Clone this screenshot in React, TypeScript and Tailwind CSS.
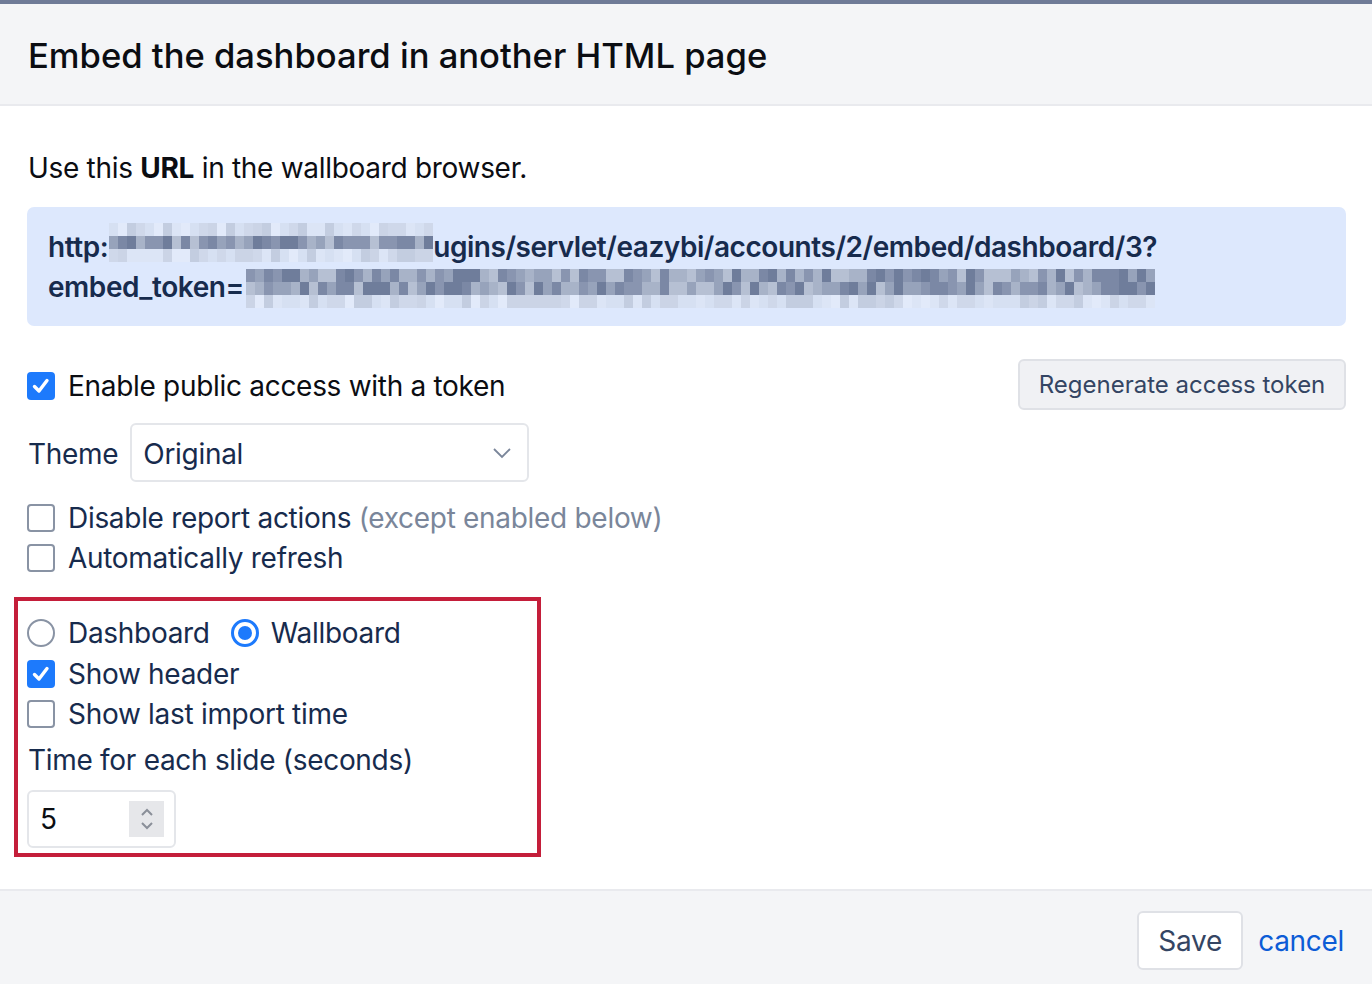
import React from "react";

function rand(seed: number) {
  let s = seed;
  return () => {
    s = (s * 9301 + 49297) % 233280;
    return s / 233280;
  };
}

const mid = ["#6f7d9b", "#7b88a5", "#8995b0", "#97a3bb", "#a8b3c8", "#b6c0d3"];
const light = ["#c3cde0", "#cfd8ea", "#d6e0f2", "#e2eafa", "#cbd4e6", "#dce5f6"];

function Pixels({ width, seed, rows }: { width: number; seed: number; rows: string[][] }) {
  const r = rand(seed);
  const cols = Math.floor(width / 9);
  return (
    <span className="inline-flex flex-col align-middle">
      {rows.map((pal, i) => (
        <span key={i} className="flex h-[13px]">
          {Array.from({ length: cols }).map((_, j) => (
            <span
              key={j}
              className="h-full w-[9px]"
              style={{ background: pal[Math.floor(r() * pal.length)] }}
            />
          ))}
        </span>
      ))}
    </span>
  );
}

function Check({ checked }: { checked?: boolean }) {
  return checked ? (
    <span className="flex h-[28px] w-[28px] shrink-0 items-center justify-center rounded-[4px] bg-[#1d7afc]">
      <svg width="22" height="22" viewBox="0 0 22 22">
        <path d="M4.5 11.5 L9 16 L17 5.5" fill="none" stroke="white" strokeWidth="3.4" strokeLinecap="round" strokeLinejoin="round" />
      </svg>
    </span>
  ) : (
    <span className="h-[28px] w-[28px] shrink-0 rounded-[4px] border-2 border-[#8993a4] bg-white" />
  );
}

function Radio({ checked }: { checked?: boolean }) {
  return checked ? (
    <span className="flex h-[28px] w-[28px] shrink-0 items-center justify-center rounded-full border-[3px] border-[#1d7afc] bg-white">
      <span className="h-[14px] w-[14px] rounded-full bg-[#1d7afc]" />
    </span>
  ) : (
    <span className="h-[28px] w-[28px] shrink-0 rounded-full border-2 border-[#8993a4] bg-white" />
  );
}

export default function App() {
  return (
    <div className="flex h-[984px] w-full flex-col bg-white text-[#172b4d]" style={{ fontFamily: "Inter, 'Noto Sans', sans-serif" }}>
      <div className="h-[4px] bg-[#6f7b97]" />
      <div className="flex h-[102px] items-center border-b-2 border-[#e9eaee] bg-[#f4f5f7] px-[28px] pt-[3px]">
        <h1 className="text-[34.6px] font-medium text-[#0b0d12]">Embed the dashboard in another HTML page</h1>
      </div>
      <div className="flex flex-1 flex-col pl-[27px] pr-[26px] pt-[42px] text-[28px] leading-[40px] tracking-[-0.3px]">
        <p className="pl-[1px] text-[#0b0d12]">
          Use this <b className="font-bold">URL</b> in the wallboard browser.
        </p>
        <div className="mt-[19px] rounded-[7px] bg-[#dde8fd] pb-[19px] pl-[21px] pr-[20px] pt-[20px] font-semibold tracking-[-0.45px] text-[#172b4d]">
          <div className="flex h-[40px] items-center">
            <span>http:</span>
            <span className="-mt-[12px] ml-[1px]"><Pixels width={328} seed={7} rows={[light, mid, light]} /></span>
            <span>ugins/servlet/eazybi/accounts/2/embed/dashboard/3?</span>
          </div>
          <div className="flex h-[40px] items-center">
            <span>embed_token=</span>
            <span className="ml-[2px]"><Pixels width={914} seed={31} rows={[mid, mid, light]} /></span>
          </div>
        </div>

        <div className="mt-[33px] flex h-[51px] items-center justify-between">
          <label className="flex items-center gap-[13px] pt-[2px] text-[#0b0d12]">
            <Check checked />
            <span>Enable public access with a token</span>
          </label>
          <button className="h-[51px] w-[328px] rounded-[6px] border-2 border-[#dfe1e6] bg-[#f0f1f4] text-[24px] tracking-normal text-[#344563]">
            Regenerate access token
          </button>
        </div>

        <div className="mt-[13px] flex items-center gap-[12px]">
          <span className="pl-[1px] pt-[2px]">Theme</span>
          <div className="flex h-[59px] w-[399px] items-center justify-between rounded-[6px] border-2 border-[#e4e6ea] bg-white pl-[11px] pr-[14px]">
            <span className="pt-[2px]">Original</span>
            <svg width="22" height="14" viewBox="0 0 22 14">
              <path d="M3 3 L11 11 L19 3" fill="none" stroke="#7a869a" strokeWidth="1.8" />
            </svg>
          </div>
        </div>

        <label className="mt-[16px] flex h-[40px] items-center gap-[13px]">
          <Check />
          <span>
            Disable report actions <span className="text-[#7a869a]">(except enabled below)</span>
          </span>
        </label>
        <label className="flex h-[40px] items-center gap-[13px]">
          <Check />
          <span>Automatically refresh</span>
        </label>

        <div className="-ml-[13px] mt-[19px] w-[527px] border-4 border-[#c41e3a] pb-[5px] pl-[9px] pt-[11px]">
          <div className="flex h-[42px] items-center">
            <label className="flex items-center gap-[13px]">
              <Radio />
              <span>Dashboard</span>
            </label>
            <label className="ml-[21px] flex items-center gap-[12px]">
              <Radio checked />
              <span>Wallboard</span>
            </label>
          </div>
          <label className="flex h-[40px] items-center gap-[13px]">
            <Check checked />
            <span>Show header</span>
          </label>
          <label className="flex h-[40px] items-center gap-[13px]">
            <Check />
            <span>Show last import time</span>
          </label>
          <div className="mt-[6px] h-[40px] pl-[1px]">Time for each slide (seconds)</div>
          <div className="mt-[10px] flex h-[58px] w-[149px] items-center justify-between rounded-[6px] border-2 border-[#e4e6ea] bg-white pl-[11px] pr-[10px]">
            <span className="text-[#0b0d12]">5</span>
            <span className="flex h-[36px] w-[35px] flex-col items-center justify-center bg-[#e6e7ea]">
              <svg width="16" height="28" viewBox="0 0 16 28">
                <path d="M3 10 L8 5 L13 10" fill="none" stroke="#8a8f99" strokeWidth="2" />
                <path d="M3 18 L8 23 L13 18" fill="none" stroke="#8a8f99" strokeWidth="2" />
              </svg>
            </span>
          </div>
        </div>
      </div>
      <div className="flex h-[95px] items-center justify-end gap-[15px] border-t-2 border-[#e9eaee] bg-[#f4f5f7] pr-[28px] pt-[6px] text-[28px] tracking-[-0.3px]">
        <button className="h-[59px] w-[106px] rounded-[6px] border-2 border-[#dfe1e6] bg-white text-[#344563]">Save</button>
        <span className="text-[#0c5cd6]">cancel</span>
      </div>
    </div>
  );
}
